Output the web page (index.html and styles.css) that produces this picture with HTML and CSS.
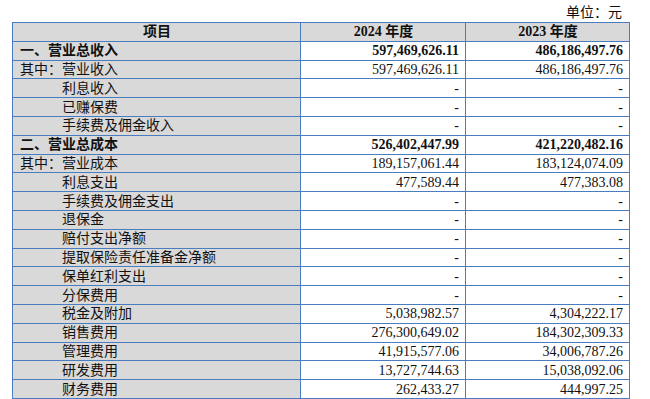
FILE: index.html
```html
<!DOCTYPE html>
<html lang="zh">
<head>
<meta charset="utf-8">
<link rel="stylesheet" href="styles.css">
</head>
<body>
<div class="page">
  <div class="unit">单位：元</div>
  <table class="fin">
    <colgroup><col class="c1"><col class="c2"><col class="c3"></colgroup>
    <thead>
      <tr class="head"><th>项目</th><th>2024 年度</th><th>2023 年度</th></tr>
    </thead>
    <tbody>
      <tr class="bold"><td class="name">一、营业总收入</td><td class="num">597,469,626.11</td><td class="num">486,186,497.76</td></tr>
      <tr><td class="name">其中：营业收入</td><td class="num">597,469,626.11</td><td class="num">486,186,497.76</td></tr>
      <tr><td class="name ind">利息收入</td><td class="num">-</td><td class="num">-</td></tr>
      <tr><td class="name ind">已赚保费</td><td class="num">-</td><td class="num">-</td></tr>
      <tr><td class="name ind">手续费及佣金收入</td><td class="num">-</td><td class="num">-</td></tr>
      <tr class="bold"><td class="name">二、营业总成本</td><td class="num">526,402,447.99</td><td class="num">421,220,482.16</td></tr>
      <tr><td class="name">其中：营业成本</td><td class="num">189,157,061.44</td><td class="num">183,124,074.09</td></tr>
      <tr><td class="name ind">利息支出</td><td class="num">477,589.44</td><td class="num">477,383.08</td></tr>
      <tr><td class="name ind">手续费及佣金支出</td><td class="num">-</td><td class="num">-</td></tr>
      <tr><td class="name ind">退保金</td><td class="num">-</td><td class="num">-</td></tr>
      <tr><td class="name ind">赔付支出净额</td><td class="num">-</td><td class="num">-</td></tr>
      <tr><td class="name ind">提取保险责任准备金净额</td><td class="num">-</td><td class="num">-</td></tr>
      <tr><td class="name ind">保单红利支出</td><td class="num">-</td><td class="num">-</td></tr>
      <tr><td class="name ind">分保费用</td><td class="num">-</td><td class="num">-</td></tr>
      <tr><td class="name ind">税金及附加</td><td class="num">5,038,982.57</td><td class="num">4,304,222.17</td></tr>
      <tr><td class="name ind">销售费用</td><td class="num">276,300,649.02</td><td class="num">184,302,309.33</td></tr>
      <tr><td class="name ind">管理费用</td><td class="num">41,915,577.06</td><td class="num">34,006,787.26</td></tr>
      <tr><td class="name ind">研发费用</td><td class="num">13,727,744.63</td><td class="num">15,038,092.06</td></tr>
      <tr><td class="name ind">财务费用</td><td class="num">262,433.27</td><td class="num">444,997.25</td></tr>
    </tbody>
  </table>
</div>
</body>
</html>
```
FILE: styles.css
```css
html, body {
  margin: 0;
  padding: 0;
  background: #ffffff;
}
body {
  font-family: "Liberation Serif", "Noto Sans CJK SC", serif;
  font-size: 14px;
  color: #111111;
}
.page {
  width: 650px;
  padding: 3px 0 0 12px;
}
.unit {
  width: 610px;
  text-align: right;
  height: 19px;
  line-height: 19px;
}
.fin {
  border-collapse: collapse;
  table-layout: fixed;
  width: 617px;
}
.c1 { width: 288px; }
.c2 { width: 165px; }
.c3 { width: 164px; }
.fin th, .fin td {
  border: 1px solid #4a7dc0;
  height: 18.8px;
  padding: 0 6px 0 7px;
  line-height: 17px;
  box-sizing: border-box;
  white-space: nowrap;
  overflow: hidden;
}
.fin th {
  background: #d9d9d9;
  font-weight: bold;
  text-align: center;
}
.fin .name {
  background: #d9d9d9;
  text-align: left;
}
.fin .ind {
  padding-left: 49px;
}
.fin .num {
  text-align: right;
}
.fin .bold td {
  font-weight: bold;
}
```
